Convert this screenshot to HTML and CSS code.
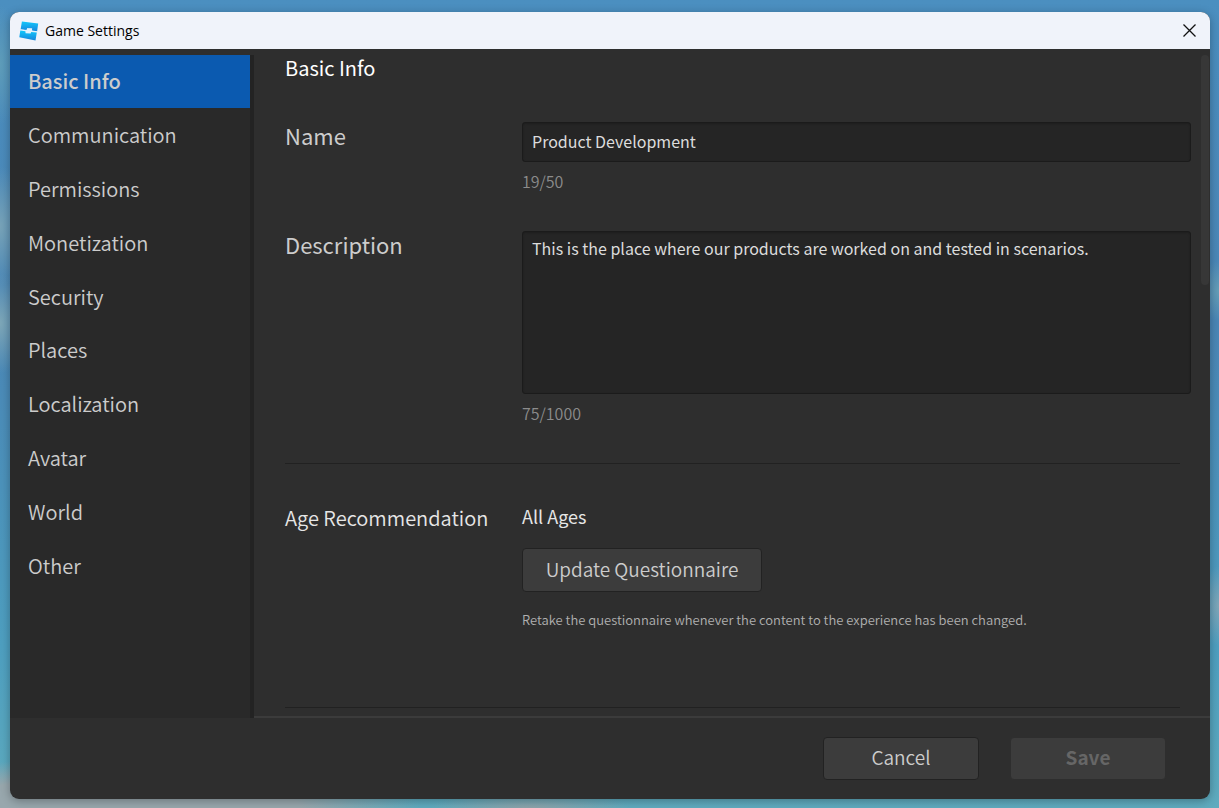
FILE: index.html
```html
<!DOCTYPE html>
<html lang="en">
<head>
<meta charset="utf-8">
<title>Game Settings</title>
<link rel="stylesheet" href="styles.css">
</head>
<body>
<div class="window">
  <header class="titlebar">
    <svg class="logo" viewBox="0 0 20 20" aria-hidden="true">
      <defs><linearGradient id="g" x1="0" y1="0" x2="0" y2="1"><stop offset="0" stop-color="#12c8fb"/><stop offset="1" stop-color="#1685dd"/></linearGradient></defs>
      <path fill="url(#g)" d="M2.9 .4 19.2 2.4 18.1 10.4 12.8 9.8 13 7.6 8 7.4 7.6 9.2 1.6 8.4Z"/>
      <path fill="#e4f2fc" d="M1.5 8.2 7.8 9.1 8 7.2 13.2 7.6 12.9 9.5 18.1 10.2 17.9 11.9 12.2 11.2 11.9 12.8 6.4 12.2 6.3 10.6 1.2 9.9Z"/>
      <path fill="url(#g)" d="M1.3 9.6 6.4 10.2 6.6 12.2 11.6 12.4 12.2 11 17.8 11.6 16.5 19.5 .3 16.2Z"/>
    </svg>
    <h1 class="title">Game Settings</h1>
    <button class="close" type="button" aria-label="Close">
      <svg viewBox="0 0 13 13" width="13" height="13"><path d="M.5.5l12 12M12.5.5l-12 12" stroke="#111" stroke-width="1.3"/></svg>
    </button>
  </header>
  <div class="body">
    <nav class="sidebar">
      <button class="tab active" type="button">Basic Info</button>
      <button class="tab" type="button">Communication</button>
      <button class="tab" type="button">Permissions</button>
      <button class="tab" type="button">Monetization</button>
      <button class="tab" type="button">Security</button>
      <button class="tab" type="button">Places</button>
      <button class="tab" type="button">Localization</button>
      <button class="tab" type="button">Avatar</button>
      <button class="tab" type="button">World</button>
      <button class="tab" type="button">Other</button>
    </nav>
    <main class="content">
      <div class="page">
        <h2 class="heading">Basic Info</h2>
        <div class="row name-row">
          <label class="label" for="name">Name</label>
          <div class="field">
            <input class="box" id="name" type="text" value="Product Development">
            <span class="count">19/50</span>
          </div>
        </div>
        <div class="row desc-row">
          <label class="label" for="desc">Description</label>
          <div class="field">
            <textarea class="box area" id="desc">This is the place where our products are worked on and tested in scenarios.</textarea>
            <span class="count">75/1000</span>
          </div>
        </div>
        <hr class="rule">
        <div class="row age-row">
          <h3 class="subheading">Age Recommendation</h3>
          <div class="field">
            <span class="value">All Ages</span>
            <button class="btn update" type="button">Update Questionnaire</button>
            <p class="hint">Retake the questionnaire whenever the content to the experience has been changed.</p>
          </div>
        </div>
        <hr class="rule">
      </div>
      <div class="scroll"><div class="thumb"></div></div>
    </main>
  </div>
  <footer class="footer">
    <button class="btn" type="button">Cancel</button>
    <button class="btn save" type="button" disabled>Save</button>
  </footer>
</div>
</body>
</html>
```
FILE: styles.css
```css
* { box-sizing: border-box; }
body {
  margin: 0;
  height: 100vh;
  padding: 12px 9px 9px 10px;
  background:
    radial-gradient(ellipse 300px 50px at 120px 100%, #98a7ad 60%, transparent),
    radial-gradient(ellipse 100px 16px at 530px 100%, #8ea3aa, transparent),
    radial-gradient(ellipse 30px 60px at 0 28%, #78a3b8, transparent),
    radial-gradient(ellipse 30px 50px at 0 40%, #7ea7b8, transparent),
    radial-gradient(ellipse 20px 60px at 0 8%, #5f9dba, transparent),
    radial-gradient(ellipse 20px 30px at 100% 36%, #669eb7, transparent),
    radial-gradient(ellipse 20px 40px at 100% 75%, #80a6b8, transparent),
    linear-gradient(180deg, #4b8fc0 0%, #4a86b6 40%, #4e9fc0 80%, #5fabbe 100%);
  font-family: "Noto Sans CJK JP", "Noto Sans", sans-serif;
  color: #ccc;
  overflow: hidden;
}
h1, h2, h3, p { margin: 0; font-weight: 400; }
button { font-family: inherit; color: inherit; }
.window {
  display: flex;
  flex-direction: column;
  height: 100%;
  border-radius: 9px;
  overflow: hidden;
  background: #2e2e2e;
  box-shadow: 0 2px 10px rgba(0, 0, 0, .3);
}
.titlebar {
  display: flex;
  align-items: center;
  flex: none;
  height: 37px;
  padding: 0 14px 0 9px;
  background: #f0f3fa;
}
.logo { width: 20px; height: 20px; }
.title {
  flex: 1;
  margin-left: 6px;
  font: 14px/20px "Open Sans", "Noto Sans", sans-serif;
  color: #000;
}
.close { display: flex; padding: 0; border: 0; background: none; }
.body { display: flex; flex: 1; min-height: 0; padding-top: 6px; }
.sidebar {
  display: grid;
  grid-auto-rows: 1fr;
  flex: none;
  gap: 1px;
  width: 244px;
  padding-bottom: 126px;
  border-right: 4px solid #232323;
  background: #292929;
}
.tab {
  padding: 0 18px 1px;
  border: 0;
  background: none;
  font-size: 20px;
  font-weight: 350;
  text-align: left;
}
.active { background: #0b5ab0; font-weight: 500; }
.content {
  display: flex;
  flex: 1;
  min-width: 0;
  border-bottom: 2px solid #3b3b3b;
}
.page { flex: 1; min-width: 0; padding-left: 31px; }
.heading { font-size: 20px; line-height: 26px; color: #fff; }
.row { display: flex; padding-right: 10px; }
.name-row { margin-top: 41px; }
.desc-row { margin-top: 38px; }
.label, .subheading { flex: none; width: 237px; }
.label { font-size: 22px; line-height: 27px; }
.field { display: flex; flex: 1; flex-direction: column; align-items: flex-start; min-width: 0; }
.box {
  display: block;
  width: 100%;
  height: 40px;
  padding: 0 9px 2px;
  border: 1px solid #1b1b1b;
  border-radius: 3px;
  background: #252525;
  box-shadow: inset 0 1px 2px #1e1e1e;
  color: #dcdcdc;
  font: 16px/24px "Noto Sans CJK JP", "Noto Sans", sans-serif;
}
.area { height: 163px; padding-top: 4px; resize: none; }
.count { margin-top: 7px; font-size: 16px; font-weight: 350; line-height: 24px; color: #8c8c8c; }
.rule { height: 1px; margin: 38px 21px 0 0; border: 0; background: #212121; }
.age-row { margin-top: 40px; padding-bottom: 38px; }
.subheading { font-size: 20px; font-weight: 350; line-height: 28px; color: #e6e6e6; }
.value { font-size: 18px; line-height: 24px; color: #e6e6e6; }
.btn {
  width: 156px;
  height: 43px;
  padding: 0 6px 4px;
  border: 1px solid #222;
  border-radius: 4px;
  background: #3c3c3c;
  font-size: 19px;
  font-weight: 350;
}
.update { width: 240px; height: 44px; margin-top: 20px; }
.hint { margin-top: 17px; font-size: 13px; font-weight: 350; line-height: 22px; color: #b0b0b0; }
.scroll { width: 9px; }
.thumb { width: 8px; height: 230px; border-radius: 4px; background: #373737; }
.footer {
  display: flex;
  flex: none;
  align-items: center;
  justify-content: flex-end;
  gap: 31px;
  height: 81px;
  padding-right: 44px;
}
.save { border-color: #2e2e2e; color: #666; font-weight: 700; }
```
